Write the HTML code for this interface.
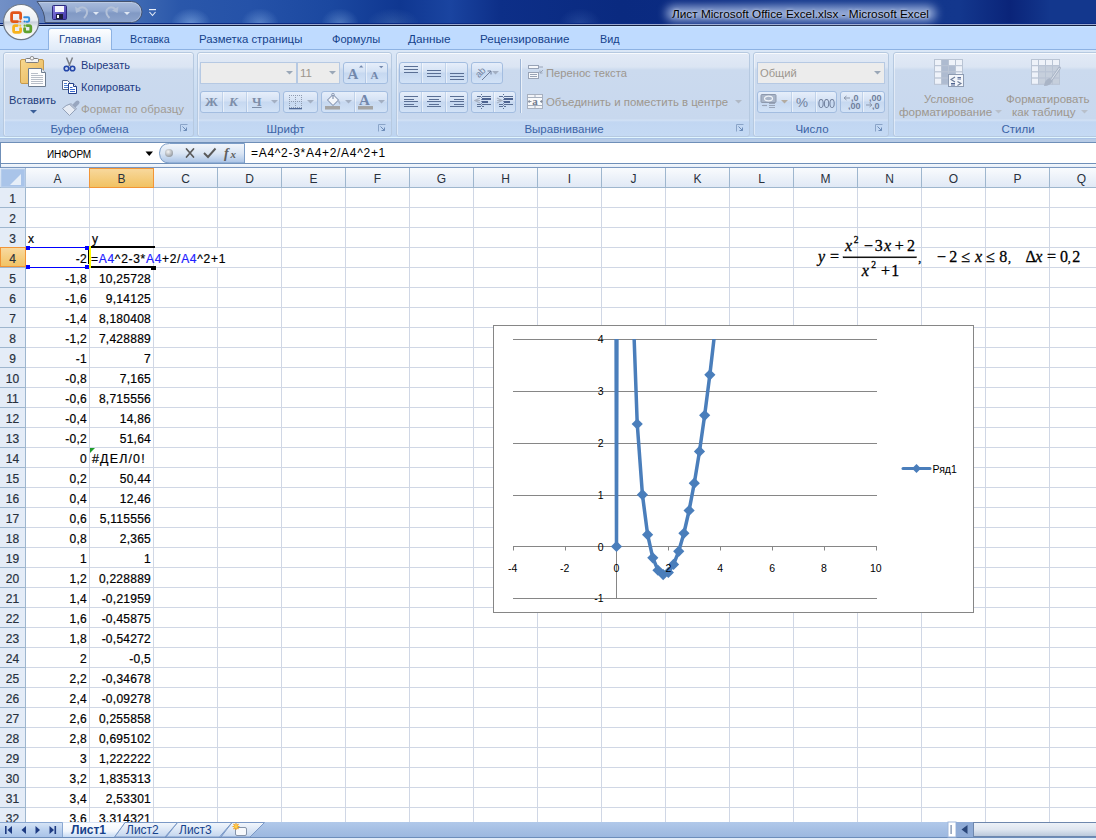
<!DOCTYPE html><html><head><meta charset="utf-8"><style>
*{margin:0;padding:0;box-sizing:border-box}
html,body{width:1096px;height:840px;overflow:hidden;background:#fff;font-family:"Liberation Sans",sans-serif}
.a{position:absolute}
.t{position:absolute;white-space:nowrap}
.tab{position:absolute;top:33px;font-size:11.3px;color:#15428b;white-space:nowrap;line-height:12px}
.grp{position:absolute;top:52px;height:85px;border:1px solid #b6c9e0;border-radius:3px;
 background:linear-gradient(#e2eaf6 0px,#dbe5f3 14px,#cbdaee 17px,#c8d8ee 66px,#d3e2f5 67px,#c1d6f2 69px,#c5daf4 84px);box-shadow:inset 0 1px 0 rgba(255,255,255,.75),inset 1px 0 0 rgba(255,255,255,.45)}
.grp .lab{position:absolute;left:0;right:18px;top:68px;height:16px;text-align:center;font-size:11.5px;color:#3b63a6;line-height:16px}
.btnb{position:absolute;border:1px solid #a3bde0;border-radius:3px;background:linear-gradient(#e6eefa,#d3e1f4 45%,#c6d8f0 50%,#d2e2f6)}
.fld{position:absolute;border:1px solid #b6c9e3;background:#ececec}
.gt{color:#8d8d8d}
.c{position:absolute;height:19px;font-size:12px;letter-spacing:0.25px;color:#000;white-space:nowrap;line-height:22px;-webkit-text-stroke:0.2px #000}
.rt{text-align:right}
.rh{position:absolute;left:0;width:25px;height:19px;font-size:12px;color:#28313d;text-align:center;line-height:22px;-webkit-text-stroke:0.2px #28313d}
.ch{position:absolute;top:168px;height:19px;font-size:12px;color:#28313d;text-align:center;line-height:22px}
</style></head><body>
<div class="a" style="left:0;top:0;width:1096px;height:24px;background:linear-gradient(90deg,#7290c6 0px,#6483be 40px,#4670b6 120px,#2a57aa 180px,#2552a8 250px,#1b48a0 330px,#0f3791 400px,#1a44a0 450px,#0d2f88 500px,#0a2a80 620px,#0b2b82 700px,#12368b 800px,#13378d 960px,#0a2479 1010px,#13378d 1050px,#13378d 1096px)"></div>
<div class="a" style="left:172px;top:9px;width:38px;height:15px;border-radius:40% 40% 0 0;background:radial-gradient(ellipse at 50% 100%,rgba(150,190,240,.55),rgba(0,0,0,0) 75%)"></div>
<div class="a" style="left:242px;top:9px;width:36px;height:15px;border-radius:40% 40% 0 0;background:radial-gradient(ellipse at 50% 100%,rgba(150,190,240,.45),rgba(0,0,0,0) 75%)"></div>
<div class="a" style="left:322px;top:9px;width:36px;height:15px;border-radius:40% 40% 0 0;background:radial-gradient(ellipse at 50% 100%,rgba(140,180,230,.45),rgba(0,0,0,0) 75%)"></div>
<div class="a" style="left:368px;top:9px;width:50px;height:15px;border-radius:40% 40% 0 0;background:radial-gradient(ellipse at 50% 100%,rgba(110,150,200,.3),rgba(0,0,0,0) 75%)"></div>
<div class="a" style="left:560px;top:9px;width:40px;height:15px;border-radius:40% 40% 0 0;background:radial-gradient(ellipse at 50% 100%,rgba(100,140,210,.25),rgba(0,0,0,0) 75%)"></div>
<div class="a" style="left:0;top:23px;width:1096px;height:1px;background:#0b2b84"></div>
<div class="a" style="left:0;top:24px;width:1096px;height:1px;background:#9aa8cf"></div>
<div class="a" style="left:0;top:25px;width:1096px;height:1px;background:#121e40"></div>
<svg class="a" style="left:30px;top:0px" width="115" height="25" viewBox="0 0 115 25">
<defs><linearGradient id="qg" x1="0" y1="0" x2="0" y2="1"><stop offset="0" stop-color="#a9bcdc"/><stop offset=".45" stop-color="#93a9d0"/><stop offset=".55" stop-color="#8199c4"/><stop offset="1" stop-color="#8da4cc"/></linearGradient></defs>
<path d="M7 1.5 H101.5 A10.5 10.5 0 0 1 101.5 22.5 H15 Q15 11 7 1.5 Z" fill="url(#qg)" stroke="#44536f" stroke-width="1"/><path d="M9 2.5 H101.5 A9.5 9.5 0 0 1 101.5 21.5" fill="none" stroke="rgba(255,255,255,.25)"/>
</svg>
<svg class="a" style="left:52px;top:5px" width="15" height="15" viewBox="0 0 15 15">
<defs><linearGradient id="sv" x1="0" y1="0" x2="1" y2="1"><stop offset="0" stop-color="#8a7fe0"/><stop offset="1" stop-color="#3e34a8"/></linearGradient></defs>
<rect x="0.5" y="0.5" width="14" height="14" rx="1" fill="url(#sv)" stroke="#2b2a7a"/>
<rect x="3" y="1" width="9" height="6" fill="#f4f4fb"/>
<rect x="4" y="9" width="7" height="5" fill="#1d1d3a"/><rect x="5" y="10" width="2" height="3" fill="#fff"/>
</svg>
<svg class="a" style="left:74px;top:5px" width="60" height="15" viewBox="0 0 60 15">
<path d="M3.5 4.5 Q9 0 12.5 4.5 Q14.5 8.5 10 13" fill="none" stroke="#b3c1d8" stroke-width="2"/><path d="M1 1.5 L2 8 L7.5 5.5 Z" fill="#b3c1d8"/>
<path d="M19 7 l3 3 l3 -3 Z" fill="#dfe7f3"/>
<path d="M42 4.5 Q36.5 0 33 4.5 Q31 8.5 35.5 13" fill="none" stroke="#b3c1d8" stroke-width="2"/><path d="M44.5 1.5 L43.5 8 L38 5.5 Z" fill="#b3c1d8"/>
<path d="M50 7 l3 3 l3 -3 Z" fill="#dfe7f3"/>
</svg>
<svg class="a" style="left:148px;top:9px" width="9" height="9" viewBox="0 0 9 9"><rect x="1" y="0" width="7" height="1.2" fill="#e8eef8"/><path d="M1.5 3 l3 3.5 l3 -3.5" fill="none" stroke="#e8eef8" stroke-width="1.1"/></svg>
<div class="a" style="left:666px;top:6px;width:270px;height:15px;border-radius:8px;background:rgba(205,220,248,.72);filter:blur(5px)"></div>
<div class="t" style="left:672px;top:7px;font-size:11.8px;color:#000;text-shadow:0 0 3px rgba(255,255,255,.8)">Лист Microsoft Office Excel.xlsx - Microsoft Excel</div>
<div class="a" style="left:0;top:26px;width:1096px;height:24px;background:linear-gradient(#cce6ff 0,#bfdbff 2px,#bfdbff 100%)"></div>
<div class="a" style="left:0;top:49px;width:1096px;height:1px;background:#8db2e3"></div>
<div class="a" style="left:48px;top:28px;width:64px;height:23px;border:1px solid #8db2e3;border-bottom:none;border-radius:3px 3px 0 0;background:linear-gradient(#fdfeff,#e9f1fb 60%,#dfeaf7)"></div>
<div class="tab" style="left:59px;font-size:11px">Главная</div>
<div class="tab" style="left:130px;font-size:10.7px">Вставка</div>
<div class="tab" style="left:199px;font-size:11.4px">Разметка страницы</div>
<div class="tab" style="left:332px;font-size:11.1px">Формулы</div>
<div class="tab" style="left:408px;font-size:11.8px">Данные</div>
<div class="tab" style="left:480px;font-size:11.6px">Рецензирование</div>
<div class="tab" style="left:600px;font-size:10.8px">Вид</div>
<svg class="a" style="left:2px;top:3px" width="40" height="40" viewBox="0 0 40 40">
<defs><linearGradient id="ob" x1="0" y1="0" x2="0" y2="1"><stop offset="0" stop-color="#ffffff"/><stop offset=".45" stop-color="#e9edf2"/><stop offset=".5" stop-color="#c9d0da"/><stop offset=".62" stop-color="#e4e8ee"/><stop offset="1" stop-color="#ffffff"/></linearGradient></defs>
<circle cx="19.1" cy="19.1" r="17.6" fill="url(#ob)" stroke="#6f7a8a" stroke-width="1.2"/>
<path d="M18.6 15.5 V11.2 Q18.6 9.6 17 9.6 H11.2 Q9.6 9.6 9.6 11.2 V17 Q9.6 18.6 11.2 18.6 H15.5" fill="none" stroke="#e2561a" stroke-width="2.8" stroke-linecap="round"/>
<path d="M22.2 14.2 H26 Q27.2 14.2 27.2 15.4 V17.6 Q27.2 18.8 26 18.8 H24.6" fill="none" stroke="#2f8fe0" stroke-width="1.9" stroke-linecap="round"/>
<path d="M15.2 22.6 H13.2 Q11.6 22.6 11.6 24.2 V27.8 Q11.6 29.4 13.2 29.4 H17 Q18.6 29.4 18.6 27.8 V25.6" fill="none" stroke="#f7b21c" stroke-width="2.8" stroke-linecap="round"/>
<path d="M25 22.6 H27.2 Q28.8 22.6 28.8 24.2 V27.2 Q28.8 28.8 27.2 28.8 H24.2 Q22.6 28.8 22.6 27.2 V25.6" fill="none" stroke="#5fa22e" stroke-width="2.8" stroke-linecap="round"/>
<circle cx="18.3" cy="18.5" r="1.1" fill="#f06a1c"/><circle cx="22.6" cy="18.5" r="1.1" fill="#2a86d8"/>
<circle cx="18.3" cy="22.7" r="1.1" fill="#f8c23a"/><circle cx="22.6" cy="22.7" r="1.1" fill="#6ab830"/>
</svg>
<div class="a" style="left:0;top:50px;width:1096px;height:89px;background:linear-gradient(#dbe7f6,#c9dcf2 50%,#bdd4f0)"></div>
<div class="a" style="left:0;top:137px;width:1096px;height:2px;background:linear-gradient(#e0f5ff 0,#e0f5ff 50%,#a9c3e6 50%)"></div>
<div class="grp" style="left:3px;width:191px"><div class="lab">Буфер обмена</div></div>
<svg class="a" style="left:180px;top:124px" width="8" height="8" viewBox="0 0 8 8"><path d="M0.5 7.5 V0.5 H7.5" fill="none" stroke="#8aa4c8"/><path d="M2.5 2.5 L6.5 6.5 M6.5 3.5 V6.5 H3.5" fill="none" stroke="#6d8cb8"/></svg>
<div class="grp" style="left:197px;width:195px"><div class="lab">Шрифт</div></div>
<svg class="a" style="left:378px;top:124px" width="8" height="8" viewBox="0 0 8 8"><path d="M0.5 7.5 V0.5 H7.5" fill="none" stroke="#8aa4c8"/><path d="M2.5 2.5 L6.5 6.5 M6.5 3.5 V6.5 H3.5" fill="none" stroke="#6d8cb8"/></svg>
<div class="grp" style="left:396px;width:354px"><div class="lab">Выравнивание</div></div>
<svg class="a" style="left:736px;top:124px" width="8" height="8" viewBox="0 0 8 8"><path d="M0.5 7.5 V0.5 H7.5" fill="none" stroke="#8aa4c8"/><path d="M2.5 2.5 L6.5 6.5 M6.5 3.5 V6.5 H3.5" fill="none" stroke="#6d8cb8"/></svg>
<div class="grp" style="left:753px;width:136px"><div class="lab">Число</div></div>
<svg class="a" style="left:875px;top:124px" width="8" height="8" viewBox="0 0 8 8"><path d="M0.5 7.5 V0.5 H7.5" fill="none" stroke="#8aa4c8"/><path d="M2.5 2.5 L6.5 6.5 M6.5 3.5 V6.5 H3.5" fill="none" stroke="#6d8cb8"/></svg>
<div class="grp" style="left:893px;width:268px"><div class="lab">Стили</div></div>
<svg class="a" style="left:19px;top:56px" width="28" height="32" viewBox="0 0 28 32">
<defs><linearGradient id="cb" x1="0" y1="0" x2="1" y2="1"><stop offset="0" stop-color="#f7d88f"/><stop offset="1" stop-color="#e9b75a"/></linearGradient></defs>
<rect x="1.5" y="3.5" width="23" height="24" rx="1.5" fill="url(#cb)" stroke="#c79a4a"/>
<rect x="6.5" y="2.5" width="13" height="4" rx="1" fill="#f4f4f4" stroke="#7d7d7d"/>
<circle cx="13" cy="2.2" r="1.8" fill="#f4f4f4" stroke="#7d7d7d" stroke-width=".8"/>
<path d="M9.5 12.5 H22.5 L26.5 16.5 V30.5 H9.5 Z" fill="#fdfdfd" stroke="#6d7c8f"/>
<path d="M22.5 12.5 V16.5 H26.5" fill="#e6e9ee" stroke="#6d7c8f"/>
<path d="M12 17.5 H19 M12 19.5 H24 M12 21.5 H24 M12 23.5 H24 M12 25.5 H24 M12 27.5 H24" stroke="#b8bec8" stroke-width="1"/>
</svg>
<div class="t" style="left:9px;top:94px;font-size:11.1px;color:#1e3d7b;line-height:12px;">Вставить</div>
<svg class="a" style="left:30px;top:110px" width="7" height="4"><path d="M0 0 H7 L3.5 3.5 Z" fill="#3b5f98"/></svg>
<svg class="a" style="left:63px;top:57px" width="13" height="15" viewBox="0 0 13 15">
<path d="M3.5 0.5 L7 9 M9.5 0.5 L6 9" stroke="#7b7f86" stroke-width="1.5"/>
<circle cx="3.5" cy="11.5" r="2.3" fill="#c9d6ef" stroke="#2446a8" stroke-width="1.6"/>
<circle cx="9.5" cy="11.5" r="2.3" fill="#c9d6ef" stroke="#2446a8" stroke-width="1.6"/>
</svg>
<div class="t" style="left:81px;top:59px;font-size:11px;color:#1e3b82;line-height:12px;">Вырезать</div>
<svg class="a" style="left:62px;top:80px" width="16" height="14" viewBox="0 0 16 14">
<path d="M0.5 0.5 H5.5 L7.5 2.5 V9.5 H0.5 Z" fill="#fff" stroke="#56698c"/>
<path d="M2 3.5 H5 M2 5.5 H6 M2 7.5 H6" stroke="#4d7fd0"/>
<path d="M6.5 3.5 H11.5 L14.5 6.5 V13.5 H6.5 Z" fill="#fff" stroke="#23408a"/>
<path d="M11.5 3.5 V6.5 H14.5" fill="#dfe6f2" stroke="#23408a"/>
<path d="M8 7.5 H10.5 M8 9.5 H13 M8 11.5 H13" stroke="#3a6ad0"/>
</svg>
<div class="t" style="left:81px;top:81px;font-size:11.1px;color:#1e3b82;line-height:12px;">Копировать</div>
<svg class="a" style="left:56px;top:96px" width="30" height="24" viewBox="0 0 30 24">
<path d="M18.5 9.5 L21.5 6.5" stroke="#98a6bf" stroke-width="4" stroke-linecap="round"/>
<path d="M6.5 12.5 L13.5 19.5 L19.5 13.5 L14 8 Q10 9 6.5 12.5 Z" fill="#e6ebf4" stroke="#93a1b8" stroke-width="1"/>
<path d="M13.5 8.5 L19.5 14 L20.5 12.5 L15 7.5 Z" fill="#b9c4d7" stroke="#93a1b8" stroke-width=".7"/>
</svg>
<div class="t" style="left:81px;top:103px;font-size:11.5px;color:#a19c95;line-height:12px;">Формат по образцу</div>
<div class="fld" style="left:200px;top:62px;width:97px;height:22px"></div>
<svg class="a" style="left:286px;top:71px" width="7" height="4"><path d="M0 0 H7 L3.5 3.5 Z" fill="#9aa7b7"/></svg>
<div class="fld" style="left:297px;top:62px;width:43px;height:22px"></div>
<div class="t" style="left:300px;top:67px;font-size:11.5px;color:#9c958c;line-height:12px;">11</div>
<svg class="a" style="left:329px;top:71px" width="7" height="4"><path d="M0 0 H7 L3.5 3.5 Z" fill="#9aa7b7"/></svg>
<div class="btnb" style="left:343px;top:62px;width:45px;height:22px"></div>
<div class="a" style="left:365px;top:63px;width:1px;height:20px;background:linear-gradient(#c5d6ec,#b0c6e4);box-shadow:1px 0 0 rgba(255,255,255,.5)"></div>
<svg class="a" style="left:346px;top:64px" width="40" height="18" viewBox="0 0 40 18">
<text x="1.5" y="15" font-family="Liberation Serif" font-weight="bold" font-size="15" fill="#7287ab">A</text>
<path d="M13 3.5 l2.2 -2.2 l2.2 2.2 Z" fill="#7287ab"/>
<text x="24.5" y="15" font-family="Liberation Serif" font-weight="bold" font-size="11" fill="#7287ab">A</text>
<path d="M33 2 h4.4 l-2.2 2.2 Z" fill="#7287ab"/>
</svg>
<div class="btnb" style="left:200px;top:91px;width:80px;height:22px"></div>
<div class="a" style="left:222px;top:92px;width:1px;height:20px;background:linear-gradient(#c5d6ec,#b0c6e4);box-shadow:1px 0 0 rgba(255,255,255,.5)"></div>
<div class="a" style="left:246px;top:92px;width:1px;height:20px;background:linear-gradient(#c5d6ec,#b0c6e4);box-shadow:1px 0 0 rgba(255,255,255,.5)"></div>
<div class="t" style="left:205px;top:94px;font-size:13px;font-weight:bold;color:#7d8ea9;font-family:'Liberation Serif'">Ж</div>
<div class="t" style="left:229px;top:94px;font-size:13px;font-style:italic;font-weight:bold;color:#7d8ea9;font-family:'Liberation Serif'">К</div>
<div class="t" style="left:252px;top:94px;font-size:13px;font-weight:bold;color:#7d8ea9;font-family:'Liberation Serif';text-decoration:underline">Ч</div>
<svg class="a" style="left:271px;top:100px" width="7" height="4"><path d="M0 0 H7 L3.5 3.5 Z" fill="#a3afc2"/></svg>
<div class="btnb" style="left:283px;top:91px;width:35px;height:22px"></div>
<svg class="a" style="left:289px;top:95px" width="14" height="16" viewBox="0 0 14 16"><rect x="0" y="0" width="1" height="1" fill="#8e9bb0"/><rect x="2" y="0" width="1" height="1" fill="#8e9bb0"/><rect x="4" y="0" width="1" height="1" fill="#8e9bb0"/><rect x="6" y="0" width="1" height="1" fill="#8e9bb0"/><rect x="8" y="0" width="1" height="1" fill="#8e9bb0"/><rect x="10" y="0" width="1" height="1" fill="#8e9bb0"/><rect x="12" y="0" width="1" height="1" fill="#8e9bb0"/><rect x="0" y="2" width="1" height="1" fill="#8e9bb0"/><rect x="6" y="2" width="1" height="1" fill="#8e9bb0"/><rect x="12" y="2" width="1" height="1" fill="#8e9bb0"/><rect x="0" y="4" width="1" height="1" fill="#8e9bb0"/><rect x="6" y="4" width="1" height="1" fill="#8e9bb0"/><rect x="12" y="4" width="1" height="1" fill="#8e9bb0"/><rect x="0" y="6" width="1" height="1" fill="#8e9bb0"/><rect x="2" y="6" width="1" height="1" fill="#8e9bb0"/><rect x="4" y="6" width="1" height="1" fill="#8e9bb0"/><rect x="6" y="6" width="1" height="1" fill="#8e9bb0"/><rect x="8" y="6" width="1" height="1" fill="#8e9bb0"/><rect x="10" y="6" width="1" height="1" fill="#8e9bb0"/><rect x="12" y="6" width="1" height="1" fill="#8e9bb0"/><rect x="0" y="8" width="1" height="1" fill="#8e9bb0"/><rect x="6" y="8" width="1" height="1" fill="#8e9bb0"/><rect x="12" y="8" width="1" height="1" fill="#8e9bb0"/><rect x="0" y="10" width="1" height="1" fill="#8e9bb0"/><rect x="6" y="10" width="1" height="1" fill="#8e9bb0"/><rect x="12" y="10" width="1" height="1" fill="#8e9bb0"/><rect x="0" y="12" width="1" height="1" fill="#8e9bb0"/><rect x="2" y="12" width="1" height="1" fill="#8e9bb0"/><rect x="4" y="12" width="1" height="1" fill="#8e9bb0"/><rect x="6" y="12" width="1" height="1" fill="#8e9bb0"/><rect x="8" y="12" width="1" height="1" fill="#8e9bb0"/><rect x="10" y="12" width="1" height="1" fill="#8e9bb0"/><rect x="12" y="12" width="1" height="1" fill="#8e9bb0"/><rect x="0" y="13" width="13" height="1.3" fill="#506a98"/></svg>
<svg class="a" style="left:307px;top:100px" width="7" height="4"><path d="M0 0 H7 L3.5 3.5 Z" fill="#a3afc2"/></svg>
<div class="btnb" style="left:321px;top:91px;width:67px;height:22px"></div>
<div class="a" style="left:354px;top:92px;width:1px;height:20px;background:linear-gradient(#c5d6ec,#b0c6e4);box-shadow:1px 0 0 rgba(255,255,255,.5)"></div>
<svg class="a" style="left:324px;top:93px" width="18" height="18" viewBox="0 0 18 18">
<path d="M3.5 7 L9 1.5 L14.5 7 L9 12.5 Z" fill="#f4f6fa" stroke="#6f80a0"/>
<path d="M9 1.5 V6" stroke="#6f80a0"/><circle cx="9" cy="1.5" r="1.3" fill="#dfe5ee" stroke="#6f80a0" stroke-width=".7"/>
<path d="M14.5 7 Q17 9 16 12 Q15 10 14 9" fill="#a9b6cc"/>
<rect x="1" y="13" width="15" height="3.5" fill="#a4a4a4"/>
</svg>
<svg class="a" style="left:345px;top:100px" width="7" height="4"><path d="M0 0 H7 L3.5 3.5 Z" fill="#a3afc2"/></svg>
<svg class="a" style="left:357px;top:92px" width="18" height="19" viewBox="0 0 18 19">
<text x="2" y="13" font-family="Liberation Serif" font-weight="bold" font-size="15" fill="#7287ab">A</text>
<rect x="1" y="14" width="15" height="3.5" fill="#a4a4a4"/>
</svg>
<svg class="a" style="left:378px;top:100px" width="7" height="4"><path d="M0 0 H7 L3.5 3.5 Z" fill="#a3afc2"/></svg>
<div class="btnb" style="left:399px;top:62px;width:69px;height:22px"></div>
<div class="a" style="left:421px;top:63px;width:1px;height:20px;background:linear-gradient(#c5d6ec,#b0c6e4);box-shadow:1px 0 0 rgba(255,255,255,.5)"></div>
<div class="a" style="left:445px;top:63px;width:1px;height:20px;background:linear-gradient(#c5d6ec,#b0c6e4);box-shadow:1px 0 0 rgba(255,255,255,.5)"></div>
<svg class="a" style="left:404px;top:66px" width="16" height="16"><rect x="0" y="0" width="14" height="1" fill="#5a6f94"/><rect x="0" y="3" width="14" height="1" fill="#5a6f94"/><rect x="0" y="6" width="14" height="1" fill="#5a6f94"/></svg>
<svg class="a" style="left:427px;top:70px" width="16" height="16"><rect x="0" y="0" width="14" height="1" fill="#5a6f94"/><rect x="0" y="3" width="14" height="1" fill="#5a6f94"/><rect x="0" y="6" width="14" height="1" fill="#5a6f94"/></svg>
<svg class="a" style="left:450px;top:73px" width="16" height="16"><rect x="0" y="0" width="14" height="1" fill="#5a6f94"/><rect x="0" y="3" width="14" height="1" fill="#5a6f94"/><rect x="0" y="6" width="14" height="1" fill="#5a6f94"/></svg>
<div class="btnb" style="left:471px;top:62px;width:32px;height:22px"></div>
<svg class="a" style="left:474px;top:64px" width="20" height="18" viewBox="0 0 20 18">
<g transform="rotate(-45 7 8)"><text x="1" y="11" font-family="Liberation Sans" font-size="9.5" fill="#7484a2">ab</text></g>
<path d="M8 16 L17 7 M13.5 7 H17 V10.5" fill="none" stroke="#6f7f9c" stroke-width="1"/>
</svg>
<svg class="a" style="left:492px;top:71px" width="7" height="4"><path d="M0 0 H7 L3.5 3.5 Z" fill="#a3afc2"/></svg>
<div class="btnb" style="left:399px;top:91px;width:69px;height:22px"></div>
<div class="a" style="left:421px;top:92px;width:1px;height:20px;background:linear-gradient(#c5d6ec,#b0c6e4);box-shadow:1px 0 0 rgba(255,255,255,.5)"></div>
<div class="a" style="left:445px;top:92px;width:1px;height:20px;background:linear-gradient(#c5d6ec,#b0c6e4);box-shadow:1px 0 0 rgba(255,255,255,.5)"></div>
<svg class="a" style="left:404px;top:96px" width="16" height="16"><rect x="0" y="0" width="14" height="1" fill="#5a6f94"/><rect x="0" y="3" width="10" height="1" fill="#5a6f94"/><rect x="0" y="5" width="14" height="1" fill="#5a6f94"/><rect x="0" y="8" width="10" height="1" fill="#5a6f94"/><rect x="0" y="10" width="14" height="1" fill="#5a6f94"/></svg>
<svg class="a" style="left:427px;top:96px" width="16" height="16"><rect x="0" y="0" width="14" height="1" fill="#5a6f94"/><rect x="2" y="3" width="10" height="1" fill="#5a6f94"/><rect x="0" y="5" width="14" height="1" fill="#5a6f94"/><rect x="2" y="8" width="10" height="1" fill="#5a6f94"/><rect x="0" y="10" width="14" height="1" fill="#5a6f94"/></svg>
<svg class="a" style="left:450px;top:96px" width="16" height="16"><rect x="0" y="0" width="14" height="1" fill="#5a6f94"/><rect x="4" y="3" width="10" height="1" fill="#5a6f94"/><rect x="0" y="5" width="14" height="1" fill="#5a6f94"/><rect x="4" y="8" width="10" height="1" fill="#5a6f94"/><rect x="0" y="10" width="14" height="1" fill="#5a6f94"/></svg>
<div class="btnb" style="left:471px;top:91px;width:45px;height:22px"></div>
<div class="a" style="left:493px;top:92px;width:1px;height:20px;background:linear-gradient(#c5d6ec,#b0c6e4);box-shadow:1px 0 0 rgba(255,255,255,.5)"></div>
<svg class="a" style="left:474px;top:94px" width="42" height="16" viewBox="0 0 42 16"><rect x="3" y="2" width="4" height="1" fill="#5a6f94"/><rect x="8" y="2" width="9" height="1" fill="#5a6f94"/><rect x="8" y="4" width="9" height="2" fill="#4d6390"/><rect x="8" y="7" width="6" height="2" fill="#4d6390"/><rect x="3" y="10" width="4" height="1" fill="#5a6f94"/><rect x="8" y="10" width="9" height="1" fill="#5a6f94"/><rect x="3" y="12" width="4" height="1" fill="#5a6f94"/><rect x="8" y="12" width="2" height="1" fill="#5a6f94"/><rect x="7" y="0" width="1" height="1" fill="#5a6f94"/><rect x="7" y="14" width="1" height="1" fill="#5a6f94"/><rect x="7" y="3" width="1" height="1" fill="#7d8db0"/><rect x="7" y="5" width="1" height="1" fill="#7d8db0"/><rect x="7" y="7" width="1" height="1" fill="#7d8db0"/><rect x="7" y="9" width="1" height="1" fill="#7d8db0"/><rect x="7" y="11" width="1" height="1" fill="#7d8db0"/><path d="M6 4 L1 6.5 L6 9" fill="none" stroke="#a9b3c4" stroke-width="1.2"/><path d="M1.5 6.5 H6" stroke="#a9b3c4"/><rect x="25" y="2" width="4" height="1" fill="#5a6f94"/><rect x="30" y="2" width="9" height="1" fill="#5a6f94"/><rect x="30" y="4" width="9" height="2" fill="#4d6390"/><rect x="30" y="7" width="6" height="2" fill="#4d6390"/><rect x="25" y="10" width="4" height="1" fill="#5a6f94"/><rect x="30" y="10" width="9" height="1" fill="#5a6f94"/><rect x="25" y="12" width="4" height="1" fill="#5a6f94"/><rect x="30" y="12" width="2" height="1" fill="#5a6f94"/><rect x="29" y="0" width="1" height="1" fill="#5a6f94"/><rect x="29" y="14" width="1" height="1" fill="#5a6f94"/><rect x="29" y="3" width="1" height="1" fill="#7d8db0"/><rect x="29" y="5" width="1" height="1" fill="#7d8db0"/><rect x="29" y="7" width="1" height="1" fill="#7d8db0"/><rect x="29" y="9" width="1" height="1" fill="#7d8db0"/><rect x="29" y="11" width="1" height="1" fill="#7d8db0"/><path d="M23 4 L28 6.5 L23 9" fill="none" stroke="#a9b3c4" stroke-width="1.2"/><path d="M23 6.5 H27.5" stroke="#a9b3c4"/></svg>
<div class="a" style="left:520px;top:59px;width:1px;height:54px;background:#9fb6d6;box-shadow:1px 0 0 rgba(255,255,255,.6)"></div>
<svg class="a" style="left:527px;top:64px" width="18" height="17" viewBox="0 0 18 17">
<rect x="1.5" y="1.5" width="10" height="3" fill="#f6f8fb" stroke="#98a3b6"/><path d="M11.5 3 H16" stroke="#98a3b6"/>
<rect x="1.5" y="8.5" width="10" height="6" fill="#f6f8fb" stroke="#98a3b6"/><path d="M3 10.5 H10 M3 12.5 H10" stroke="#98a3b6"/>
<path d="M16 6 L13 9 M13 6.5 V9 H15.5" fill="none" stroke="#98a3b6"/>
</svg>
<div class="t" style="left:546px;top:67px;font-size:11.2px;color:#9d978f;line-height:12px;">Перенос текста</div>
<svg class="a" style="left:527px;top:94px" width="17" height="16" viewBox="0 0 17 16">
<rect x="0.5" y="0.5" width="15" height="14" fill="#f2f4f8" stroke="#a7b0bf"/>
<path d="M0.5 3.5 H15.5 M0.5 11.5 H15.5 M8 0.5 V3.5 M8 11.5 V14.5" stroke="#a7b0bf"/>
<rect x="1" y="4" width="14" height="7" fill="#fafbfc"/>
<text x="8" y="11" text-anchor="middle" font-family="Liberation Serif" font-weight="bold" font-size="11" fill="#6f7a8e">a</text>
<path d="M1.5 7.5 H4.5 M13 7.5 H15 M2.5 6 L1.5 7.5 L2.5 9 M14 6 L15 7.5 L14 9" fill="none" stroke="#7d8799" stroke-width=".9"/>
</svg>
<div class="t" style="left:546px;top:96px;font-size:11.4px;color:#9d978f;line-height:12px;">Объединить и поместить в центре</div>
<svg class="a" style="left:735px;top:100px" width="7" height="4"><path d="M0 0 H7 L3.5 3.5 Z" fill="#b0b8c4"/></svg>
<div class="fld" style="left:757px;top:62px;width:128px;height:22px"></div>
<div class="t" style="left:760px;top:67px;font-size:11.2px;color:#9d978f;line-height:12px;">Общий</div>
<svg class="a" style="left:874px;top:71px" width="7" height="4"><path d="M0 0 H7 L3.5 3.5 Z" fill="#9aa7b7"/></svg>
<div class="btnb" style="left:757px;top:91px;width:80px;height:22px"></div>
<div class="a" style="left:791px;top:92px;width:1px;height:20px;background:linear-gradient(#c5d6ec,#b0c6e4);box-shadow:1px 0 0 rgba(255,255,255,.5)"></div>
<div class="a" style="left:815px;top:92px;width:1px;height:20px;background:linear-gradient(#c5d6ec,#b0c6e4);box-shadow:1px 0 0 rgba(255,255,255,.5)"></div>
<svg class="a" style="left:760px;top:93px" width="20" height="17" viewBox="0 0 20 17">
<rect x="1" y="1.5" width="15" height="8" rx="1" fill="#a9b5c8" stroke="#8d99ad"/>
<ellipse cx="8.5" cy="5.5" rx="4" ry="2.3" fill="none" stroke="#eef2f7" stroke-width="1.2"/>
<path d="M9 10.5 H15 M9 12.5 H15 M9 14.5 H15" stroke="#9aa5b8" stroke-width="1.2"/>
<path d="M2 12.5 H7" stroke="#9aa5b8" stroke-width="1.2"/>
</svg>
<svg class="a" style="left:781px;top:100px" width="7" height="4"><path d="M0 0 H7 L3.5 3.5 Z" fill="#b3aba0"/></svg>
<div class="t" style="left:796px;top:95px;font-size:13.5px;color:#6f7f9c;line-height:16px">%</div>
<div class="t" style="left:818px;top:95px;font-size:11px;color:#6f7f9c;letter-spacing:-0.6px;transform:scaleY(1.2);transform-origin:0 50%;line-height:16px">000</div>
<div class="btnb" style="left:840px;top:91px;width:45px;height:22px"></div>
<div class="a" style="left:862px;top:92px;width:1px;height:20px;background:linear-gradient(#c5d6ec,#b0c6e4);box-shadow:1px 0 0 rgba(255,255,255,.5)"></div>
<svg class="a" style="left:843px;top:93px" width="40" height="17" viewBox="0 0 40 17">
<g font-family="Liberation Sans" font-size="9" font-weight="bold" fill="#6f7f9c">
<text x="8" y="8">,0</text><text x="5" y="16">,00</text>
<text x="26" y="8">,00</text><text x="29" y="16">,0</text></g>
<path d="M1 5 H7 M1 5 L3.5 3 M1 5 L3.5 7" stroke="#8d99ad" fill="none"/>
<path d="M23 12 H29 M29 12 L26.5 10 M29 12 L26.5 14" stroke="#8d99ad" fill="none"/>
</svg>
<svg class="a" style="left:934px;top:59px" width="32" height="30"><rect x="0.5" y="0.5" width="7" height="6.2" fill="#eef2f9" stroke="#b9c4d4"/><rect x="7.5" y="0.5" width="7" height="6.2" fill="#aebbd0" stroke="#b9c4d4"/><rect x="14.5" y="0.5" width="7" height="6.2" fill="#eef2f9" stroke="#b9c4d4"/><rect x="21.5" y="0.5" width="7" height="6.2" fill="#eef2f9" stroke="#b9c4d4"/><rect x="0.5" y="6.7" width="7" height="6.2" fill="#eef2f9" stroke="#b9c4d4"/><rect x="7.5" y="6.7" width="7" height="6.2" fill="#aebbd0" stroke="#b9c4d4"/><rect x="14.5" y="6.7" width="7" height="6.2" fill="#aebbd0" stroke="#b9c4d4"/><rect x="21.5" y="6.7" width="7" height="6.2" fill="#eef2f9" stroke="#b9c4d4"/><rect x="0.5" y="12.9" width="7" height="6.2" fill="#eef2f9" stroke="#b9c4d4"/><rect x="7.5" y="12.9" width="7" height="6.2" fill="#aebbd0" stroke="#b9c4d4"/><rect x="14.5" y="12.9" width="7" height="6.2" fill="#aebbd0" stroke="#b9c4d4"/><rect x="21.5" y="12.9" width="7" height="6.2" fill="#eef2f9" stroke="#b9c4d4"/><rect x="0.5" y="19.1" width="7" height="6.2" fill="#eef2f9" stroke="#b9c4d4"/><rect x="7.5" y="19.1" width="7" height="6.2" fill="#aebbd0" stroke="#b9c4d4"/><rect x="14.5" y="19.1" width="7" height="6.2" fill="#eef2f9" stroke="#b9c4d4"/><rect x="21.5" y="19.1" width="7" height="6.2" fill="#eef2f9" stroke="#b9c4d4"/><rect x="14.5" y="15.5" width="15" height="12" fill="#f2f5fa" stroke="#8d9bb2"/><path d="M21 18 L17 20.5 L21 23" fill="none" stroke="#6a7a98" stroke-width="1.1"/><path d="M17 24.5 H21 M17 26 H21" stroke="#4f6390" stroke-width="1"/><path d="M23.5 18.5 H27 M23.5 20 H27" stroke="#4f6390" stroke-width=".9"/><path d="M23.5 22.5 L27 24.5 L23.5 26.5" fill="none" stroke="#6a7a98" stroke-width="1.1"/></svg>
<svg class="a" style="left:1031px;top:59px" width="32" height="30"><rect x="0.5" y="0.5" width="7" height="6.2" fill="#eef2f9" stroke="#b9c4d4"/><rect x="7.5" y="0.5" width="7" height="6.2" fill="#eef2f9" stroke="#b9c4d4"/><rect x="14.5" y="0.5" width="7" height="6.2" fill="#eef2f9" stroke="#b9c4d4"/><rect x="21.5" y="0.5" width="7" height="6.2" fill="#eef2f9" stroke="#b9c4d4"/><rect x="0.5" y="6.7" width="7" height="6.2" fill="#eef2f9" stroke="#b9c4d4"/><rect x="7.5" y="6.7" width="7" height="6.2" fill="#c6cfdc" stroke="#b9c4d4"/><rect x="14.5" y="6.7" width="7" height="6.2" fill="#c6cfdc" stroke="#b9c4d4"/><rect x="21.5" y="6.7" width="7" height="6.2" fill="#c6cfdc" stroke="#b9c4d4"/><rect x="0.5" y="12.9" width="7" height="6.2" fill="#eef2f9" stroke="#b9c4d4"/><rect x="7.5" y="12.9" width="7" height="6.2" fill="#c6cfdc" stroke="#b9c4d4"/><rect x="14.5" y="12.9" width="7" height="6.2" fill="#c6cfdc" stroke="#b9c4d4"/><rect x="21.5" y="12.9" width="7" height="6.2" fill="#c6cfdc" stroke="#b9c4d4"/><rect x="0.5" y="19.1" width="7" height="6.2" fill="#eef2f9" stroke="#b9c4d4"/><rect x="7.5" y="19.1" width="7" height="6.2" fill="#c6cfdc" stroke="#b9c4d4"/><rect x="14.5" y="19.1" width="7" height="6.2" fill="#c6cfdc" stroke="#b9c4d4"/><rect x="21.5" y="19.1" width="7" height="6.2" fill="#c6cfdc" stroke="#b9c4d4"/><path d="M13 27 Q13.5 21 18.5 19 L21.5 22 Q19.5 27 13 27 Z" fill="#a9b4c6"/><path d="M20.5 20.5 L28.5 9" stroke="#aab5c7" stroke-width="2.8" stroke-linecap="round"/><path d="M20.5 20.5 L28.5 9" stroke="#dfe5ee" stroke-width="1"/></svg>
<div class="t" style="left:924px;top:93px;font-size:11.3px;color:#9d978f;line-height:12px;">Условное</div>
<div class="t" style="left:899px;top:106px;font-size:11.6px;color:#9d978f;line-height:12px;">форматирование</div>
<svg class="a" style="left:995px;top:110px" width="7" height="4"><path d="M0 0 H7 L3.5 3.5 Z" fill="#b8bfca"/></svg>
<div class="t" style="left:1006px;top:93px;font-size:11.5px;color:#9d978f;line-height:12px;">Форматировать</div>
<div class="t" style="left:1012px;top:106px;font-size:11.6px;color:#9d978f;line-height:12px;">как таблицу</div>
<svg class="a" style="left:1081px;top:110px" width="7" height="4"><path d="M0 0 H7 L3.5 3.5 Z" fill="#b8bfca"/></svg>
<div class="a" style="left:0;top:139px;width:1096px;height:29px;background:#b7cbe6"></div>
<div class="a" style="left:0;top:142px;width:1096px;height:22px;border-top:1px solid #6f8fb8;border-bottom:1px solid #6f8fb8;background:#fff"></div>
<div class="a" style="left:0;top:164px;width:1096px;height:3px;background:linear-gradient(#f4f8fc,#e6eef8)"></div>
<div class="a" style="left:0;top:167px;width:1096px;height:1px;background:#7b98c0"></div>
<div class="a" style="left:0;top:142px;width:1px;height:26px;background:#6f8fb8"></div>
<div class="t" style="left:47px;top:148.6px;font-size:10px;color:#000;letter-spacing:-0.1px">ИНФОРМ</div>
<svg class="a" style="left:145px;top:151px" width="9" height="6"><path d="M0.5 0.5 H8 L4.25 5 Z" fill="#000"/></svg>
<svg class="a" style="left:158px;top:143px" width="87" height="21" viewBox="0 0 87 21">
<defs><linearGradient id="fb" x1="0" y1="0" x2="0" y2="1"><stop offset="0" stop-color="#f3f6fb"/><stop offset=".5" stop-color="#dbe6f4"/><stop offset="1" stop-color="#a9c3e6"/></linearGradient>
<radialGradient id="fc" cx="40%" cy="35%" r="70%"><stop offset="0" stop-color="#f4f4f4"/><stop offset="1" stop-color="#8f959c"/></radialGradient></defs>
<path d="M11.5 0.5 H86.5 V20 H11.5 Q2 20 1.5 10.25 Q2 0.5 11.5 0.5 Z" fill="url(#fb)" stroke="#7b9cc6" stroke-width="1"/>
<circle cx="11" cy="10" r="4" fill="url(#fc)"/>
<path d="M28.5 6 L35.5 14 M35.5 6 L28.5 14" stroke="#5a5a5a" stroke-width="1.7" stroke-linecap="round"/>
<path d="M46 10 L50 14 L57.5 5.5" fill="none" stroke="#5a5a5a" stroke-width="1.9"/>
<text x="66" y="15" font-family="Liberation Serif" font-style="italic" font-weight="bold" font-size="14" fill="#5e5e5e">f</text>
<text x="72.5" y="15" font-family="Liberation Serif" font-style="italic" font-weight="bold" font-size="11" fill="#5e5e5e">x</text>
</svg>
<div class="t" style="left:251px;top:146px;font-size:12px;letter-spacing:0.7px;color:#000">=A4^2-3*A4+2/A4^2+1</div>
<svg class="a" style="left:0;top:168px" width="1096" height="654"><defs><linearGradient id="hg" x1="0" y1="0" x2="0" y2="1"><stop offset="0" stop-color="#f9fbfd"/><stop offset="1" stop-color="#dfe8f5"/></linearGradient><linearGradient id="og" x1="0" y1="0" x2="0" y2="1"><stop offset="0" stop-color="#f8d99f"/><stop offset="1" stop-color="#f1c15f"/></linearGradient></defs><rect x="0" y="0" width="1096" height="20" fill="url(#hg)"/><rect x="0" y="20" width="26" height="634" fill="#e4ecf7"/><rect x="89" y="0" width="65" height="20" fill="url(#og)"/><rect x="0" y="80" width="26" height="20" fill="url(#og)"/><line x1="26" y1="39.5" x2="1096" y2="39.5" stroke="#d0d7e5"/><line x1="0" y1="39.5" x2="26" y2="39.5" stroke="#9eb6ce"/><line x1="26" y1="59.5" x2="1096" y2="59.5" stroke="#d0d7e5"/><line x1="0" y1="59.5" x2="26" y2="59.5" stroke="#9eb6ce"/><line x1="26" y1="79.5" x2="1096" y2="79.5" stroke="#d0d7e5"/><line x1="0" y1="79.5" x2="26" y2="79.5" stroke="#9eb6ce"/><line x1="26" y1="99.5" x2="1096" y2="99.5" stroke="#d0d7e5"/><line x1="0" y1="99.5" x2="26" y2="99.5" stroke="#9eb6ce"/><line x1="26" y1="119.5" x2="1096" y2="119.5" stroke="#d0d7e5"/><line x1="0" y1="119.5" x2="26" y2="119.5" stroke="#9eb6ce"/><line x1="26" y1="139.5" x2="1096" y2="139.5" stroke="#d0d7e5"/><line x1="0" y1="139.5" x2="26" y2="139.5" stroke="#9eb6ce"/><line x1="26" y1="159.5" x2="1096" y2="159.5" stroke="#d0d7e5"/><line x1="0" y1="159.5" x2="26" y2="159.5" stroke="#9eb6ce"/><line x1="26" y1="179.5" x2="1096" y2="179.5" stroke="#d0d7e5"/><line x1="0" y1="179.5" x2="26" y2="179.5" stroke="#9eb6ce"/><line x1="26" y1="199.5" x2="1096" y2="199.5" stroke="#d0d7e5"/><line x1="0" y1="199.5" x2="26" y2="199.5" stroke="#9eb6ce"/><line x1="26" y1="219.5" x2="1096" y2="219.5" stroke="#d0d7e5"/><line x1="0" y1="219.5" x2="26" y2="219.5" stroke="#9eb6ce"/><line x1="26" y1="239.5" x2="1096" y2="239.5" stroke="#d0d7e5"/><line x1="0" y1="239.5" x2="26" y2="239.5" stroke="#9eb6ce"/><line x1="26" y1="259.5" x2="1096" y2="259.5" stroke="#d0d7e5"/><line x1="0" y1="259.5" x2="26" y2="259.5" stroke="#9eb6ce"/><line x1="26" y1="279.5" x2="1096" y2="279.5" stroke="#d0d7e5"/><line x1="0" y1="279.5" x2="26" y2="279.5" stroke="#9eb6ce"/><line x1="26" y1="299.5" x2="1096" y2="299.5" stroke="#d0d7e5"/><line x1="0" y1="299.5" x2="26" y2="299.5" stroke="#9eb6ce"/><line x1="26" y1="319.5" x2="1096" y2="319.5" stroke="#d0d7e5"/><line x1="0" y1="319.5" x2="26" y2="319.5" stroke="#9eb6ce"/><line x1="26" y1="339.5" x2="1096" y2="339.5" stroke="#d0d7e5"/><line x1="0" y1="339.5" x2="26" y2="339.5" stroke="#9eb6ce"/><line x1="26" y1="359.5" x2="1096" y2="359.5" stroke="#d0d7e5"/><line x1="0" y1="359.5" x2="26" y2="359.5" stroke="#9eb6ce"/><line x1="26" y1="379.5" x2="1096" y2="379.5" stroke="#d0d7e5"/><line x1="0" y1="379.5" x2="26" y2="379.5" stroke="#9eb6ce"/><line x1="26" y1="399.5" x2="1096" y2="399.5" stroke="#d0d7e5"/><line x1="0" y1="399.5" x2="26" y2="399.5" stroke="#9eb6ce"/><line x1="26" y1="419.5" x2="1096" y2="419.5" stroke="#d0d7e5"/><line x1="0" y1="419.5" x2="26" y2="419.5" stroke="#9eb6ce"/><line x1="26" y1="439.5" x2="1096" y2="439.5" stroke="#d0d7e5"/><line x1="0" y1="439.5" x2="26" y2="439.5" stroke="#9eb6ce"/><line x1="26" y1="459.5" x2="1096" y2="459.5" stroke="#d0d7e5"/><line x1="0" y1="459.5" x2="26" y2="459.5" stroke="#9eb6ce"/><line x1="26" y1="479.5" x2="1096" y2="479.5" stroke="#d0d7e5"/><line x1="0" y1="479.5" x2="26" y2="479.5" stroke="#9eb6ce"/><line x1="26" y1="499.5" x2="1096" y2="499.5" stroke="#d0d7e5"/><line x1="0" y1="499.5" x2="26" y2="499.5" stroke="#9eb6ce"/><line x1="26" y1="519.5" x2="1096" y2="519.5" stroke="#d0d7e5"/><line x1="0" y1="519.5" x2="26" y2="519.5" stroke="#9eb6ce"/><line x1="26" y1="539.5" x2="1096" y2="539.5" stroke="#d0d7e5"/><line x1="0" y1="539.5" x2="26" y2="539.5" stroke="#9eb6ce"/><line x1="26" y1="559.5" x2="1096" y2="559.5" stroke="#d0d7e5"/><line x1="0" y1="559.5" x2="26" y2="559.5" stroke="#9eb6ce"/><line x1="26" y1="579.5" x2="1096" y2="579.5" stroke="#d0d7e5"/><line x1="0" y1="579.5" x2="26" y2="579.5" stroke="#9eb6ce"/><line x1="26" y1="599.5" x2="1096" y2="599.5" stroke="#d0d7e5"/><line x1="0" y1="599.5" x2="26" y2="599.5" stroke="#9eb6ce"/><line x1="26" y1="619.5" x2="1096" y2="619.5" stroke="#d0d7e5"/><line x1="0" y1="619.5" x2="26" y2="619.5" stroke="#9eb6ce"/><line x1="26" y1="639.5" x2="1096" y2="639.5" stroke="#d0d7e5"/><line x1="0" y1="639.5" x2="26" y2="639.5" stroke="#9eb6ce"/><line x1="26" y1="659.5" x2="1096" y2="659.5" stroke="#d0d7e5"/><line x1="0" y1="659.5" x2="26" y2="659.5" stroke="#9eb6ce"/><line x1="89.5" y1="20" x2="89.5" y2="654" stroke="#d0d7e5"/><line x1="89.5" y1="0" x2="89.5" y2="20" stroke="#9eb6ce"/><line x1="153.5" y1="20" x2="153.5" y2="654" stroke="#d0d7e5"/><line x1="153.5" y1="0" x2="153.5" y2="20" stroke="#9eb6ce"/><line x1="217.5" y1="20" x2="217.5" y2="654" stroke="#d0d7e5"/><line x1="217.5" y1="0" x2="217.5" y2="20" stroke="#9eb6ce"/><line x1="281.5" y1="20" x2="281.5" y2="654" stroke="#d0d7e5"/><line x1="281.5" y1="0" x2="281.5" y2="20" stroke="#9eb6ce"/><line x1="345.5" y1="20" x2="345.5" y2="654" stroke="#d0d7e5"/><line x1="345.5" y1="0" x2="345.5" y2="20" stroke="#9eb6ce"/><line x1="409.5" y1="20" x2="409.5" y2="654" stroke="#d0d7e5"/><line x1="409.5" y1="0" x2="409.5" y2="20" stroke="#9eb6ce"/><line x1="473.5" y1="20" x2="473.5" y2="654" stroke="#d0d7e5"/><line x1="473.5" y1="0" x2="473.5" y2="20" stroke="#9eb6ce"/><line x1="537.5" y1="20" x2="537.5" y2="654" stroke="#d0d7e5"/><line x1="537.5" y1="0" x2="537.5" y2="20" stroke="#9eb6ce"/><line x1="601.5" y1="20" x2="601.5" y2="654" stroke="#d0d7e5"/><line x1="601.5" y1="0" x2="601.5" y2="20" stroke="#9eb6ce"/><line x1="665.5" y1="20" x2="665.5" y2="654" stroke="#d0d7e5"/><line x1="665.5" y1="0" x2="665.5" y2="20" stroke="#9eb6ce"/><line x1="729.5" y1="20" x2="729.5" y2="654" stroke="#d0d7e5"/><line x1="729.5" y1="0" x2="729.5" y2="20" stroke="#9eb6ce"/><line x1="793.5" y1="20" x2="793.5" y2="654" stroke="#d0d7e5"/><line x1="793.5" y1="0" x2="793.5" y2="20" stroke="#9eb6ce"/><line x1="857.5" y1="20" x2="857.5" y2="654" stroke="#d0d7e5"/><line x1="857.5" y1="0" x2="857.5" y2="20" stroke="#9eb6ce"/><line x1="921.5" y1="20" x2="921.5" y2="654" stroke="#d0d7e5"/><line x1="921.5" y1="0" x2="921.5" y2="20" stroke="#9eb6ce"/><line x1="985.5" y1="20" x2="985.5" y2="654" stroke="#d0d7e5"/><line x1="985.5" y1="0" x2="985.5" y2="20" stroke="#9eb6ce"/><line x1="1049.5" y1="20" x2="1049.5" y2="654" stroke="#d0d7e5"/><line x1="1049.5" y1="0" x2="1049.5" y2="20" stroke="#9eb6ce"/><line x1="1113.5" y1="20" x2="1113.5" y2="654" stroke="#d0d7e5"/><line x1="1113.5" y1="0" x2="1113.5" y2="20" stroke="#9eb6ce"/><line x1="25.5" y1="0" x2="25.5" y2="654" stroke="#9eb6ce"/><line x1="0" y1="19.5" x2="1096" y2="19.5" stroke="#9eb6ce"/><rect x="89.5" y="0.5" width="64" height="19" fill="none" stroke="#f29536"/><rect x="0.5" y="79.5" width="25" height="19" fill="none" stroke="#f29536"/><rect x="1" y="1" width="24" height="18" fill="#a9c4e9" stroke="#c0d4ee"/><path d="M10 17 L21 17 L21 6 Z" fill="#e6eef8"/></svg>
<div class="ch" style="left:26px;width:63px">A</div>
<div class="ch" style="left:90px;width:63px">B</div>
<div class="ch" style="left:154px;width:63px">C</div>
<div class="ch" style="left:218px;width:63px">D</div>
<div class="ch" style="left:282px;width:63px">E</div>
<div class="ch" style="left:346px;width:63px">F</div>
<div class="ch" style="left:410px;width:63px">G</div>
<div class="ch" style="left:474px;width:63px">H</div>
<div class="ch" style="left:538px;width:63px">I</div>
<div class="ch" style="left:602px;width:63px">J</div>
<div class="ch" style="left:666px;width:63px">K</div>
<div class="ch" style="left:730px;width:63px">L</div>
<div class="ch" style="left:794px;width:63px">M</div>
<div class="ch" style="left:858px;width:63px">N</div>
<div class="ch" style="left:922px;width:63px">O</div>
<div class="ch" style="left:986px;width:63px">P</div>
<div class="ch" style="left:1050px;width:63px">Q</div>
<div class="rh" style="top:188px">1</div>
<div class="rh" style="top:208px">2</div>
<div class="rh" style="top:228px">3</div>
<div class="rh" style="top:248px">4</div>
<div class="rh" style="top:268px">5</div>
<div class="rh" style="top:288px">6</div>
<div class="rh" style="top:308px">7</div>
<div class="rh" style="top:328px">8</div>
<div class="rh" style="top:348px">9</div>
<div class="rh" style="top:368px">10</div>
<div class="rh" style="top:388px">11</div>
<div class="rh" style="top:408px">12</div>
<div class="rh" style="top:428px">13</div>
<div class="rh" style="top:448px">14</div>
<div class="rh" style="top:468px">15</div>
<div class="rh" style="top:488px">16</div>
<div class="rh" style="top:508px">17</div>
<div class="rh" style="top:528px">18</div>
<div class="rh" style="top:548px">19</div>
<div class="rh" style="top:568px">20</div>
<div class="rh" style="top:588px">21</div>
<div class="rh" style="top:608px">22</div>
<div class="rh" style="top:628px">23</div>
<div class="rh" style="top:648px">24</div>
<div class="rh" style="top:668px">25</div>
<div class="rh" style="top:688px">26</div>
<div class="rh" style="top:708px">27</div>
<div class="rh" style="top:728px">28</div>
<div class="rh" style="top:748px">29</div>
<div class="rh" style="top:768px">30</div>
<div class="rh" style="top:788px">31</div>
<div class="rh" style="top:808px">32</div>
<div class="c" style="left:28px;top:228px;">x</div>
<div class="c" style="left:92px;top:228px;">y</div>
<div class="c rt" style="left:26px;top:248px;width:61px;">-2</div>
<div class="c rt" style="left:26px;top:268px;width:61px;">-1,8</div>
<div class="c rt" style="left:90px;top:268px;width:61px;">10,25728</div>
<div class="c rt" style="left:26px;top:288px;width:61px;">-1,6</div>
<div class="c rt" style="left:90px;top:288px;width:61px;">9,14125</div>
<div class="c rt" style="left:26px;top:308px;width:61px;">-1,4</div>
<div class="c rt" style="left:90px;top:308px;width:61px;">8,180408</div>
<div class="c rt" style="left:26px;top:328px;width:61px;">-1,2</div>
<div class="c rt" style="left:90px;top:328px;width:61px;">7,428889</div>
<div class="c rt" style="left:26px;top:348px;width:61px;">-1</div>
<div class="c rt" style="left:90px;top:348px;width:61px;">7</div>
<div class="c rt" style="left:26px;top:368px;width:61px;">-0,8</div>
<div class="c rt" style="left:90px;top:368px;width:61px;">7,165</div>
<div class="c rt" style="left:26px;top:388px;width:61px;">-0,6</div>
<div class="c rt" style="left:90px;top:388px;width:61px;">8,715556</div>
<div class="c rt" style="left:26px;top:408px;width:61px;">-0,4</div>
<div class="c rt" style="left:90px;top:408px;width:61px;">14,86</div>
<div class="c rt" style="left:26px;top:428px;width:61px;">-0,2</div>
<div class="c rt" style="left:90px;top:428px;width:61px;">51,64</div>
<div class="c rt" style="left:26px;top:448px;width:61px;">0</div>
<div class="c" style="left:92px;top:448px;letter-spacing:1.2px;font-size:12.4px">#ДЕЛ/0!</div>
<div class="c rt" style="left:26px;top:468px;width:61px;">0,2</div>
<div class="c rt" style="left:90px;top:468px;width:61px;">50,44</div>
<div class="c rt" style="left:26px;top:488px;width:61px;">0,4</div>
<div class="c rt" style="left:90px;top:488px;width:61px;">12,46</div>
<div class="c rt" style="left:26px;top:508px;width:61px;">0,6</div>
<div class="c rt" style="left:90px;top:508px;width:61px;">5,115556</div>
<div class="c rt" style="left:26px;top:528px;width:61px;">0,8</div>
<div class="c rt" style="left:90px;top:528px;width:61px;">2,365</div>
<div class="c rt" style="left:26px;top:548px;width:61px;">1</div>
<div class="c rt" style="left:90px;top:548px;width:61px;">1</div>
<div class="c rt" style="left:26px;top:568px;width:61px;">1,2</div>
<div class="c rt" style="left:90px;top:568px;width:61px;">0,228889</div>
<div class="c rt" style="left:26px;top:588px;width:61px;">1,4</div>
<div class="c rt" style="left:90px;top:588px;width:61px;">-0,21959</div>
<div class="c rt" style="left:26px;top:608px;width:61px;">1,6</div>
<div class="c rt" style="left:90px;top:608px;width:61px;">-0,45875</div>
<div class="c rt" style="left:26px;top:628px;width:61px;">1,8</div>
<div class="c rt" style="left:90px;top:628px;width:61px;">-0,54272</div>
<div class="c rt" style="left:26px;top:648px;width:61px;">2</div>
<div class="c rt" style="left:90px;top:648px;width:61px;">-0,5</div>
<div class="c rt" style="left:26px;top:668px;width:61px;">2,2</div>
<div class="c rt" style="left:90px;top:668px;width:61px;">-0,34678</div>
<div class="c rt" style="left:26px;top:688px;width:61px;">2,4</div>
<div class="c rt" style="left:90px;top:688px;width:61px;">-0,09278</div>
<div class="c rt" style="left:26px;top:708px;width:61px;">2,6</div>
<div class="c rt" style="left:90px;top:708px;width:61px;">0,255858</div>
<div class="c rt" style="left:26px;top:728px;width:61px;">2,8</div>
<div class="c rt" style="left:90px;top:728px;width:61px;">0,695102</div>
<div class="c rt" style="left:26px;top:748px;width:61px;">3</div>
<div class="c rt" style="left:90px;top:748px;width:61px;">1,222222</div>
<div class="c rt" style="left:26px;top:768px;width:61px;">3,2</div>
<div class="c rt" style="left:90px;top:768px;width:61px;">1,835313</div>
<div class="c rt" style="left:26px;top:788px;width:61px;">3,4</div>
<div class="c rt" style="left:90px;top:788px;width:61px;">2,53301</div>
<div class="c rt" style="left:26px;top:808px;width:61px;">3,6</div>
<div class="c rt" style="left:90px;top:808px;width:61px;">3,314321</div>
<svg class="a" style="left:90px;top:448px" width="6" height="6"><path d="M0 0 H5 L0 5 Z" fill="#1f9d2a"/></svg>
<div class="a" style="left:26px;top:247px;width:63px;height:1.4px;background:#0000ff"></div>
<div class="a" style="left:26px;top:267px;width:63px;height:1.4px;background:#0000ff"></div>
<div class="a" style="left:26px;top:246px;width:3.5px;height:4px;background:#0000ff"></div>
<div class="a" style="left:85px;top:246px;width:3.5px;height:4px;background:#0000ff"></div>
<div class="a" style="left:26px;top:265px;width:3.5px;height:4px;background:#0000ff"></div>
<div class="a" style="left:85px;top:265px;width:3.5px;height:4px;background:#0000ff"></div>
<div class="a" style="left:154px;top:248px;width:75px;height:19px;background:#fff"></div>
<div class="a" style="left:91px;top:246px;width:64px;height:2px;background:#000"></div>
<div class="a" style="left:91px;top:266px;width:60px;height:2px;background:#000"></div>
<div class="a" style="left:151px;top:266px;width:5px;height:4px;background:#000"></div>
<div class="a" style="left:88.5px;top:246px;width:2.5px;height:22px;background:#ffff00"></div>
<div class="a" style="left:87.5px;top:250px;width:1px;height:14px;background:#000"></div>
<div class="c" style="left:91px;top:248px;letter-spacing:0.7px;-webkit-text-stroke:0.2px #000">=<span style="color:#2020ff;-webkit-text-stroke:0.2px #2020ff">A4</span>^2-3*<span style="color:#2020ff;-webkit-text-stroke:0.2px #2020ff">A4</span>+2/<span style="color:#2020ff;-webkit-text-stroke:0.2px #2020ff">A4</span>^2+1</div>
<svg class="a" style="left:0;top:0" width="1096" height="840"><rect x="493.5" y="325.5" width="480" height="287" fill="#fff" stroke="#868686"/><defs><clipPath id="pa"><rect x="513" y="339" width="364" height="260"/></clipPath></defs><line x1="513" y1="339.5" x2="877" y2="339.5" stroke="#868686"/><line x1="513" y1="391.5" x2="877" y2="391.5" stroke="#868686"/><line x1="513" y1="443.5" x2="877" y2="443.5" stroke="#868686"/><line x1="513" y1="495.5" x2="877" y2="495.5" stroke="#868686"/><line x1="513" y1="598.5" x2="877" y2="598.5" stroke="#868686"/><line x1="513" y1="546.5" x2="877" y2="546.5" stroke="#868686"/><line x1="616.5" y1="339" x2="616.5" y2="599" stroke="#868686"/><line x1="513.5" y1="546.5" x2="513.5" y2="550.5" stroke="#868686"/><line x1="565.5" y1="546.5" x2="565.5" y2="550.5" stroke="#868686"/><line x1="616.5" y1="546.5" x2="616.5" y2="550.5" stroke="#868686"/><line x1="668.5" y1="546.5" x2="668.5" y2="550.5" stroke="#868686"/><line x1="720.5" y1="546.5" x2="720.5" y2="550.5" stroke="#868686"/><line x1="772.5" y1="546.5" x2="772.5" y2="550.5" stroke="#868686"/><line x1="824.5" y1="546.5" x2="824.5" y2="550.5" stroke="#868686"/><line x1="876.5" y1="546.5" x2="876.5" y2="550.5" stroke="#868686"/><g clip-path="url(#pa)"><path d="M564.64 -49.20 L569.83 15.17 L575.01 72.98 L580.20 122.75 L585.38 161.68 L590.57 183.90 L595.76 175.35 L600.94 95.03 L606.13 -223.25 L611.31 -2128.45 L616.50 546.50 L621.69 -2066.29 L626.87 -98.93 L632.06 281.51 L637.24 423.99 L642.43 494.70 L647.62 534.64 L652.80 557.87 L657.99 570.26 L663.17 574.61 L668.36 572.40 L673.55 564.46 L678.73 551.31 L683.92 533.25 L689.10 510.49 L694.29 483.19 L699.48 451.43 L704.66 415.29 L709.85 374.82 L715.03 330.05 L720.22 281.03 L725.41 227.75 L730.59 170.26 L735.78 108.56 L740.96 42.65 L746.15 -27.44 L751.34 -101.72 L756.52 -180.18 L761.71 -262.81 L766.89 -349.61 L772.08 -440.58 L777.27 -535.71 L782.45 -635.00 L787.64 -738.45 L792.82 -846.05 L798.01 -957.81 L803.20 -1073.73 L808.38 -1193.80 L813.57 -1318.02 L818.75 -1446.39 L823.94 -1578.92" fill="none" stroke="#4a7ebb" stroke-width="3.5" stroke-linejoin="round"/></g><path d="M616.50 540.90 L622.10 546.50 L616.50 552.10 L610.90 546.50 Z" fill="#4a7ebb"/><path d="M637.24 418.39 L642.84 423.99 L637.24 429.59 L631.64 423.99 Z" fill="#4a7ebb"/><path d="M642.43 489.10 L648.03 494.70 L642.43 500.30 L636.83 494.70 Z" fill="#4a7ebb"/><path d="M647.62 529.04 L653.22 534.64 L647.62 540.24 L642.02 534.64 Z" fill="#4a7ebb"/><path d="M652.80 552.27 L658.40 557.87 L652.80 563.47 L647.20 557.87 Z" fill="#4a7ebb"/><path d="M657.99 564.66 L663.59 570.26 L657.99 575.86 L652.39 570.26 Z" fill="#4a7ebb"/><path d="M663.17 569.01 L668.77 574.61 L663.17 580.21 L657.57 574.61 Z" fill="#4a7ebb"/><path d="M668.36 566.80 L673.96 572.40 L668.36 578.00 L662.76 572.40 Z" fill="#4a7ebb"/><path d="M673.55 558.86 L679.15 564.46 L673.55 570.06 L667.95 564.46 Z" fill="#4a7ebb"/><path d="M678.73 545.71 L684.33 551.31 L678.73 556.91 L673.13 551.31 Z" fill="#4a7ebb"/><path d="M683.92 527.65 L689.52 533.25 L683.92 538.85 L678.32 533.25 Z" fill="#4a7ebb"/><path d="M689.10 504.89 L694.70 510.49 L689.10 516.09 L683.50 510.49 Z" fill="#4a7ebb"/><path d="M694.29 477.59 L699.89 483.19 L694.29 488.79 L688.69 483.19 Z" fill="#4a7ebb"/><path d="M699.48 445.83 L705.08 451.43 L699.48 457.03 L693.88 451.43 Z" fill="#4a7ebb"/><path d="M704.66 409.69 L710.26 415.29 L704.66 420.89 L699.06 415.29 Z" fill="#4a7ebb"/><path d="M709.85 369.22 L715.45 374.82 L709.85 380.42 L704.25 374.82 Z" fill="#4a7ebb"/><text x="512.78" y="572" font-family="Liberation Sans" font-size="10.5" text-anchor="middle" fill="#000">-4</text><text x="564.64" y="572" font-family="Liberation Sans" font-size="10.5" text-anchor="middle" fill="#000">-2</text><text x="616.5" y="572" font-family="Liberation Sans" font-size="10.5" text-anchor="middle" fill="#000">0</text><text x="668.36" y="572" font-family="Liberation Sans" font-size="10.5" text-anchor="middle" fill="#000">2</text><text x="720.22" y="572" font-family="Liberation Sans" font-size="10.5" text-anchor="middle" fill="#000">4</text><text x="772.0799999999999" y="572" font-family="Liberation Sans" font-size="10.5" text-anchor="middle" fill="#000">6</text><text x="823.94" y="572" font-family="Liberation Sans" font-size="10.5" text-anchor="middle" fill="#000">8</text><text x="875.8" y="572" font-family="Liberation Sans" font-size="10.5" text-anchor="middle" fill="#000">10</text><text x="603.5" y="343.3" font-family="Liberation Sans" font-size="10.5" text-anchor="end" fill="#000">4</text><text x="603.5" y="395.1" font-family="Liberation Sans" font-size="10.5" text-anchor="end" fill="#000">3</text><text x="603.5" y="446.9" font-family="Liberation Sans" font-size="10.5" text-anchor="end" fill="#000">2</text><text x="603.5" y="498.7" font-family="Liberation Sans" font-size="10.5" text-anchor="end" fill="#000">1</text><text x="603.5" y="550.5" font-family="Liberation Sans" font-size="10.5" text-anchor="end" fill="#000">0</text><text x="603.5" y="602.3" font-family="Liberation Sans" font-size="10.5" text-anchor="end" fill="#000">-1</text><line x1="903" y1="468.5" x2="930" y2="468.5" stroke="#4a7ebb" stroke-width="3" stroke-linecap="round"/><path d="M916.5 464 L921 468.5 L916.5 473 L912 468.5 Z" fill="#4a7ebb"/><text x="932.5" y="472.5" font-family="Liberation Sans" font-size="10.5" fill="#000">Ряд1</text></svg>
<svg class="a" style="left:0;top:0" width="1096" height="840"><g font-family="Liberation Serif" fill="#000" stroke="#000" stroke-width="0.3">
<text x="821.5" y="262" font-size="16" text-anchor="middle" font-style="italic">y</text>
<text x="834.5" y="262" font-size="16" text-anchor="middle">=</text>
<text x="848.5" y="250.8" font-size="16" text-anchor="middle" font-style="italic">x</text>
<text x="856.2" y="242.5" font-size="9.5" text-anchor="middle">2</text>
<text x="868.5" y="250.8" font-size="16" text-anchor="middle">−</text>
<text x="878.8" y="250.8" font-size="16" text-anchor="middle">3</text>
<text x="887.5" y="250.8" font-size="16" text-anchor="middle" font-style="italic">x</text>
<text x="899.3" y="250.8" font-size="16" text-anchor="middle">+</text>
<text x="911" y="250.8" font-size="16" text-anchor="middle">2</text>
<rect x="843" y="256.8" width="73.5" height="1.1" fill="#000"/>
<text x="865.3" y="275.7" font-size="16" text-anchor="middle" font-style="italic">x</text>
<text x="873.5" y="267.8" font-size="9.5" text-anchor="middle">2</text>
<text x="885.5" y="275.7" font-size="16" text-anchor="middle">+</text>
<text x="895.3" y="275.7" font-size="16" text-anchor="middle">1</text>
<text x="919.8" y="262" font-size="12" text-anchor="middle">,</text>
<text x="941.5" y="262" font-size="16" text-anchor="middle">−</text>
<text x="953.2" y="262" font-size="16" text-anchor="middle">2</text>
<text x="965.6" y="262" font-size="16" text-anchor="middle">≤</text>
<text x="978.5" y="262" font-size="16" text-anchor="middle" font-style="italic">x</text>
<text x="990.4" y="262" font-size="16" text-anchor="middle">≤</text>
<text x="1003.3" y="262" font-size="16" text-anchor="middle">8</text>
<text x="1009.5" y="262" font-size="12" text-anchor="middle">,</text>
<text x="1030.6" y="262" font-size="16" text-anchor="middle">Δ</text>
<text x="1038.8" y="262" font-size="16" text-anchor="middle" font-style="italic">x</text>
<text x="1051.5" y="262" font-size="16" text-anchor="middle">=</text>
<text x="1064" y="262" font-size="16" text-anchor="middle">0</text>
<text x="1069.3" y="262" font-size="12" text-anchor="middle">,</text>
<text x="1076.3" y="262" font-size="16" text-anchor="middle">2</text>
</g></svg>
<svg class="a" style="left:0;top:820px" width="1096" height="20" viewBox="0 820 1096 20">
<defs>
<linearGradient id="sb" x1="0" y1="0" x2="0" y2="1"><stop offset="0" stop-color="#b1c9ea"/><stop offset=".5" stop-color="#a5bfe4"/><stop offset="1" stop-color="#9bb7df"/></linearGradient>
<linearGradient id="st" x1="0" y1="0" x2="0" y2="1"><stop offset="0" stop-color="#f3f7fc"/><stop offset=".5" stop-color="#dce7f6"/><stop offset="1" stop-color="#c3d5ee"/></linearGradient>
<linearGradient id="sa" x1="0" y1="0" x2="0" y2="1"><stop offset="0" stop-color="#ffffff"/><stop offset=".6" stop-color="#f1f6fc"/><stop offset="1" stop-color="#c6daf4"/></linearGradient>
<linearGradient id="nv" x1="0" y1="0" x2="0" y2="1"><stop offset="0" stop-color="#d9e6f7"/><stop offset=".5" stop-color="#bcd2ef"/><stop offset="1" stop-color="#a9c3e8"/></linearGradient>
<linearGradient id="hs" x1="0" y1="0" x2="0" y2="1"><stop offset="0" stop-color="#eef2f8"/><stop offset=".5" stop-color="#dfe6f0"/><stop offset="1" stop-color="#b9c7da"/></linearGradient>
</defs>
<rect x="0" y="822" width="1096" height="16" fill="url(#sb)"/>
<rect x="0" y="837" width="1096" height="1" fill="#6c8dbb"/>
<rect x="0" y="838" width="1096" height="2" fill="#e3ecf8"/>
<rect x="0" y="822" width="63" height="15" fill="url(#nv)"/>
<path d="M0 822.5 H62.5 V837" fill="none" stroke="#8aa8d2"/>
<g fill="#1e3b82">
<rect x="5" y="826" width="1.6" height="8"/><path d="M12 826 L7.5 830 L12 834 Z"/>
<path d="M26 826 L21.5 830 L26 834 Z"/>
<path d="M35.5 826 L40 830 L35.5 834 Z"/>
<path d="M49.5 826 L54 830 L49.5 834 Z"/><rect x="54.5" y="826" width="1.6" height="8"/>
</g>
<path d="M221 837 L232 822.5 H264.5 L250 837 Z" fill="url(#st)" stroke="#7a98c6"/>
<path d="M166 837 L177.5 822.5 H232 L219.5 837 Z" fill="url(#st)" stroke="#7a98c6"/>
<path d="M114.5 837 L125 822.5 H177.5 L165 837 Z" fill="url(#st)" stroke="#7a98c6"/>
<path d="M63 822.5 H125 L114.5 837 H63 Z" fill="url(#sa)"/>
<path d="M125 822.5 L114.5 837" stroke="#7a98c6" fill="none"/>
<rect x="948" y="822" width="8" height="15" fill="#fff" stroke="#9fb7db"/>
<rect x="950.5" y="825" width="1.2" height="9" fill="#6f85a8"/>
<rect x="956" y="822" width="17" height="15" fill="#8fabd6"/>
<path d="M967.5 825 L961.5 829.5 L967.5 834 Z" fill="#2a4679"/>
<rect x="973.5" y="822.5" width="130" height="14" fill="url(#hs)" stroke="#6e87ad"/>
</svg>
<div class="t" style="left:71px;top:823px;font-size:12px;font-weight:bold;color:#15428b;line-height:14px">Лист1</div>
<div class="t" style="left:126px;top:823px;font-size:12px;color:#15428b;line-height:14px">Лист2</div>
<div class="t" style="left:179px;top:823px;font-size:12px;color:#15428b;line-height:14px">Лист3</div>
<svg class="a" style="left:232px;top:823px" width="16" height="14" viewBox="0 0 16 14">
<rect x="3.5" y="4.5" width="11" height="8" rx="1.5" fill="#f7f9fc" stroke="#8694aa"/>
<path d="M4 0 V7 M0.5 3.5 H7.5 M1.5 1 L6.5 6 M6.5 1 L1.5 6" stroke="#f5a623" stroke-width="1.2"/>
<circle cx="4" cy="3.5" r="1.6" fill="#ffd24a"/>
</svg>
</body></html>
